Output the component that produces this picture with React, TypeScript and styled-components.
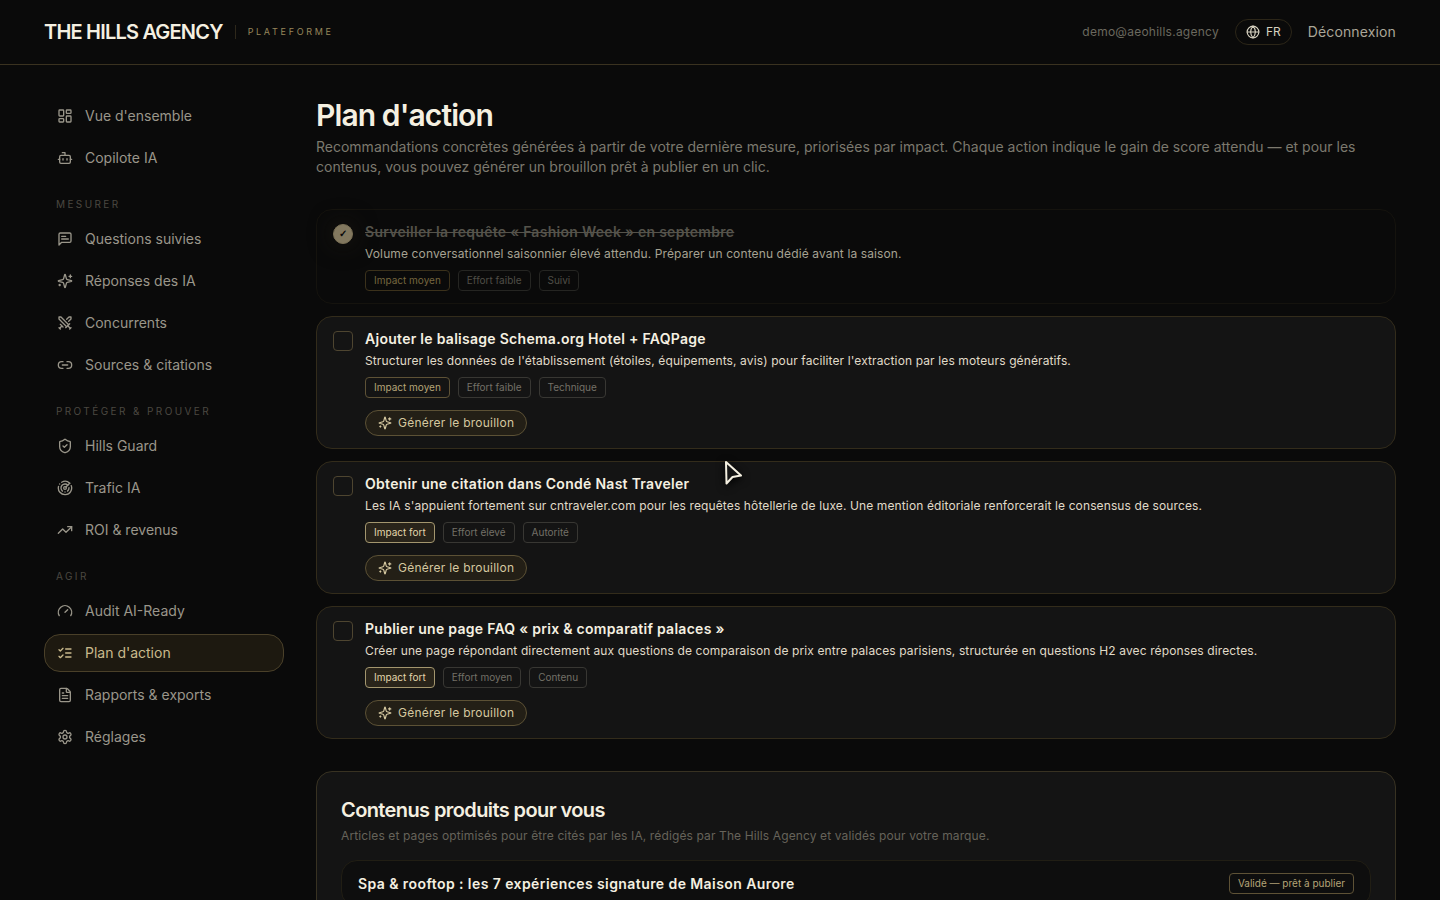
import React from "react";
import styled, { createGlobalStyle, css } from "styled-components";
import {
  LayoutDashboard, Bot, Swords, Link2, ShieldCheck, Radar, TrendingUp, Gauge, FileText, Globe,
} from "lucide-react";

const GlobalStyle = createGlobalStyle`
  * { box-sizing: border-box; }
  body {
    margin: 0;
    background: #0a0a0a;
    color: #f5f0e1;
    font-family: Inter, "Liberation Sans", sans-serif;
    font-size: 14px;
    line-height: 20px;
  }
  h1, h2, h3, p, ul { margin: 0; padding: 0; }
  ul { list-style: none; }
  button { font: inherit; letter-spacing: inherit; cursor: pointer; }
`;

const Shell = styled.div`
  height: 100vh;
  overflow: hidden;
  position: relative;
`;

const Header = styled.header`
  display: flex;
  align-items: center;
  justify-content: space-between;
  height: 65px;
  padding: 0 44px;
  border-bottom: 1px solid #3a3220;
`;

const Brand = styled.div`
  display: flex;
  align-items: center;
  gap: 12px;
`;

const BrandName = styled.a`
  color: #f5f0e1;
  text-decoration: none;
  font-size: 20px;
  line-height: 28px;
  font-weight: 600;
  letter-spacing: -0.04em;
`;

const BrandTag = styled.span`
  padding-left: 12px;
  border-left: 1px solid #2e281b;
  color: #97865a;
  font-size: 9px;
  line-height: 14px;
  letter-spacing: 0.3em;
`;

const Account = styled.div`
  display: flex;
  align-items: center;
  gap: 16px;
`;

const Email = styled.span`
  color: #6b695f;
  font-size: 12px;
  line-height: 16px;
  letter-spacing: 0.02em;
`;

const LangButton = styled.button`
  display: flex;
  align-items: center;
  gap: 6px;
  height: 26px;
  padding: 0 10px;
  border: 1px solid #2c2618;
  border-radius: 13px;
  background: transparent;
  color: #d6d1c0;
  font-size: 12px;
`;

const LogoutButton = styled.button`
  padding: 0;
  border: 0;
  background: transparent;
  color: #aaa698;
  letter-spacing: 0.01em;
`;

const Body = styled.div`
  display: grid;
  grid-template-columns: 240px minmax(0, 1fr);
  gap: 32px;
  padding: 32px 44px;
`;

const Nav = styled.nav`
  display: flex;
  flex-direction: column;
  gap: 4px;
`;

const NavHeading = styled.h2`
  padding: 16px 12px 4px;
  color: #4a4841;
  font-size: 10px;
  line-height: 15px;
  font-weight: 400;
  letter-spacing: 0.24em;
  text-transform: uppercase;
`;

const NavLink = styled.a<{ $active?: boolean }>`
  display: flex;
  align-items: center;
  gap: 12px;
  height: 38px;
  padding: 0 12px;
  border: 1px solid transparent;
  border-radius: 16px;
  color: #9a968a;
  text-decoration: none;
  ${(p) => p.$active && css`
    border-color: #4a4029;
    background: #1d1910;
    color: #c9b98c;
  `}
`;

const Title = styled.h1`
  font-size: 30px;
  line-height: 36px;
  font-weight: 600;
  letter-spacing: -0.03em;
`;

const Lead = styled.p`
  margin-top: 4px;
  color: #7c796e;
`;

const ActionList = styled.ul`
  display: flex;
  flex-direction: column;
  gap: 12px;
  margin-top: 32px;
`;

const ActionCard = styled.li<{ $done?: boolean }>`
  display: flex;
  gap: 12px;
  padding: 12px 16px;
  border: 1px solid #332c1b;
  border-radius: 16px;
  background: #141414;
  ${(p) => p.$done && css`
    border-color: #15130e;
    background: #0a0a0a;
  `}
`;

const Check = styled.input`
  appearance: none;
  flex: none;
  display: grid;
  place-items: center;
  width: 20px;
  height: 20px;
  margin: 2px 0 0;
  border: 1px solid #4e4530;
  border-radius: 4px;
  background: transparent;
  &:checked {
    border-color: #7a7056;
    border-radius: 10px;
    background: #82785f;
    box-shadow: 0 0 24px #1c1810;
  }
  &:checked::after {
    content: "✓";
    color: #0a0a0a;
    font-size: 10px;
    line-height: 18px;
    font-weight: 700;
  }
`;

const ActionBody = styled.div`
  min-width: 0;
`;

const ActionTitle = styled.label<{ $done?: boolean }>`
  display: block;
  font-weight: 600;
  letter-spacing: 0.02em;
  color: ${(p) => (p.$done ? "#55534b" : "#f5f0e1")};
  text-decoration: ${(p) => (p.$done ? "line-through" : "none")};
`;

const ActionText = styled.p<{ $done?: boolean }>`
  margin-top: 2px;
  font-size: 12px;
  letter-spacing: 0.01em;
  color: ${(p) => (p.$done ? "#a6a292" : "#e0dbc9")};
`;

const Tags = styled.div`
  display: flex;
  gap: 8px;
  margin-top: 6px;
`;

type Tone = "strong" | "medium" | "mediumDone" | "plain" | "plainDone";
const tones: Record<Tone, ReturnType<typeof css>> = {
  strong: css`border-color: #a3966e; background: #29241a; color: #e3d6ab;`,
  medium: css`border-color: #5e5236; color: #b5a477;`,
  mediumDone: css`border-color: #3b311b; color: #75663f;`,
  plain: css`border-color: #383733; color: #737067;`,
  plainDone: css`border-color: #252522; color: #504e47;`,
};

const Tag = styled.span<{ $tone: Tone }>`
  height: 21px;
  padding: 0 8px;
  border: 1px solid;
  border-radius: 4px;
  font-size: 10px;
  line-height: 19px;
  white-space: nowrap;
  ${(p) => tones[p.$tone]}
`;

const DraftButton = styled.button`
  display: flex;
  align-items: center;
  gap: 6px;
  height: 26px;
  margin-top: 12px;
  padding: 0 12px;
  border: 1px solid #5c5135;
  border-radius: 13px;
  background: #231f16;
  color: #d5c8a0;
  font-size: 12px;
  letter-spacing: 0.02em;
`;

const Panel = styled.section`
  margin-top: 32px;
  padding: 24px;
  border: 1px solid #383222;
  border-radius: 16px;
  background: #141414;
`;

const PanelTitle = styled.h2`
  font-size: 20px;
  line-height: 28px;
  font-weight: 600;
  letter-spacing: -0.03em;
`;

const PanelText = styled.p`
  margin-top: 4px;
  color: #66635a;
  font-size: 12px;
  line-height: 16px;
  letter-spacing: 0.01em;
`;

const Article = styled.article`
  display: flex;
  align-items: center;
  justify-content: space-between;
  margin-top: 16px;
  padding: 12px 16px;
  border: 1px solid #211e14;
  border-radius: 16px;
  background: #0e0e0e;
`;

const ArticleTitle = styled.h3`
  font-size: 14px;
  line-height: 20px;
  font-weight: 600;
  letter-spacing: 0.03em;
`;

const Cursor = styled.svg`
  position: absolute;
  left: 720px;
  top: 456px;
  filter: drop-shadow(0 2px 4px #000);
`;

type IconProps = { size?: number };

const Stroke = ({ size = 16, children }: IconProps & { children: React.ReactNode }) => (
  <svg
    width={size} height={size} viewBox="0 0 24 24" fill="none" stroke="currentColor" strokeWidth="2"
    strokeLinecap="round" strokeLinejoin="round" aria-hidden="true"
  >
    {children}
  </svg>
);

const SparklesIcon = ({ size }: IconProps) => (
  <Stroke size={size}>
    <path d="M9.937 15.5A2 2 0 0 0 8.5 14.063l-6.135-1.582a.5.5 0 0 1 0-.962L8.5 9.936A2 2 0 0 0 9.937 8.5l1.582-6.135a.5.5 0 0 1 .963 0L14.063 8.5A2 2 0 0 0 15.5 9.937l6.135 1.581a.5.5 0 0 1 0 .964L15.5 14.063a2 2 0 0 0-1.437 1.437l-1.582 6.135a.5.5 0 0 1-.963 0z" />
    <path d="M20 3v4M22 5h-4M4 17v2M5 18H3" />
  </Stroke>
);

const MessageIcon = ({ size }: IconProps) => (
  <Stroke size={size}>
    <path d="M21 15a2 2 0 0 1-2 2H7l-4 4V5a2 2 0 0 1 2-2h14a2 2 0 0 1 2 2z" />
    <path d="M13 8H7M17 12H7" />
  </Stroke>
);

const ChecksIcon = ({ size }: IconProps) => (
  <Stroke size={size}>
    <path d="m3 17 2 2 4-4M3 7l2 2 4-4M13 6h8M13 12h8M13 18h8" />
  </Stroke>
);

const SettingsIcon = ({ size }: IconProps) => (
  <Stroke size={size}>
    <path d="M12.22 2h-.44a2 2 0 0 0-2 2v.18a2 2 0 0 1-1 1.73l-.43.25a2 2 0 0 1-2 0l-.15-.08a2 2 0 0 0-2.73.73l-.22.38a2 2 0 0 0 .73 2.73l.15.1a2 2 0 0 1 1 1.72v.51a2 2 0 0 1-1 1.74l-.15.09a2 2 0 0 0-.73 2.73l.22.38a2 2 0 0 0 2.73.73l.15-.08a2 2 0 0 1 2 0l.43.25a2 2 0 0 1 1 1.73V20a2 2 0 0 0 2 2h.44a2 2 0 0 0 2-2v-.18a2 2 0 0 1 1-1.73l.43-.25a2 2 0 0 1 2 0l.15.08a2 2 0 0 0 2.73-.73l.22-.39a2 2 0 0 0-.73-2.73l-.15-.08a2 2 0 0 1-1-1.74v-.5a2 2 0 0 1 1-1.74l.15-.09a2 2 0 0 0 .73-2.73l-.22-.38a2 2 0 0 0-2.73-.73l-.15.08a2 2 0 0 1-2 0l-.43-.25a2 2 0 0 1-1-1.73V4a2 2 0 0 0-2-2z" />
    <circle cx="12" cy="12" r="3" />
  </Stroke>
);

type Entry = { icon: React.ComponentType<IconProps>; label: string; active?: boolean };
const groups: { heading?: string; items: Entry[] }[] = [
  { items: [{ icon: LayoutDashboard, label: "Vue d'ensemble" }, { icon: Bot, label: "Copilote IA" }] },
  {
    heading: "Mesurer",
    items: [
      { icon: MessageIcon, label: "Questions suivies" },
      { icon: SparklesIcon, label: "Réponses des IA" },
      { icon: Swords, label: "Concurrents" },
      { icon: Link2, label: "Sources & citations" },
    ],
  },
  {
    heading: "Protéger & prouver",
    items: [
      { icon: ShieldCheck, label: "Hills Guard" },
      { icon: Radar, label: "Trafic IA" },
      { icon: TrendingUp, label: "ROI & revenus" },
    ],
  },
  {
    heading: "Agir",
    items: [
      { icon: Gauge, label: "Audit AI-Ready" },
      { icon: ChecksIcon, label: "Plan d'action", active: true },
      { icon: FileText, label: "Rapports & exports" },
      { icon: SettingsIcon, label: "Réglages" },
    ],
  },
];

const actions = [
  {
    title: "Surveiller la requête « Fashion Week » en septembre",
    text: "Volume conversationnel saisonnier élevé attendu. Préparer un contenu dédié avant la saison.",
    impact: "Impact moyen", tags: ["Effort faible", "Suivi"], done: true,
  },
  {
    title: "Ajouter le balisage Schema.org Hotel + FAQPage",
    text: "Structurer les données de l'établissement (étoiles, équipements, avis) pour faciliter l'extraction par les moteurs génératifs.",
    impact: "Impact moyen", tags: ["Effort faible", "Technique"], done: false,
  },
  {
    title: "Obtenir une citation dans Condé Nast Traveler",
    text: "Les IA s'appuient fortement sur cntraveler.com pour les requêtes hôtellerie de luxe. Une mention éditoriale renforcerait le consensus de sources.",
    impact: "Impact fort", tags: ["Effort élevé", "Autorité"], done: false,
  },
  {
    title: "Publier une page FAQ « prix & comparatif palaces »",
    text: "Créer une page répondant directement aux questions de comparaison de prix entre palaces parisiens, structurée en questions H2 avec réponses directes.",
    impact: "Impact fort", tags: ["Effort moyen", "Contenu"], done: false,
  },
];

function impactTone(impact: string, done: boolean): Tone {
  if (impact === "Impact fort") return "strong";
  return done ? "mediumDone" : "medium";
}

export default function App() {
  return (
    <Shell>
      <GlobalStyle />
      <Header>
        <Brand>
          <BrandName href="#">THE HILLS AGENCY</BrandName>
          <BrandTag>PLATEFORME</BrandTag>
        </Brand>
        <Account>
          <Email>demo@aeohills.agency</Email>
          <LangButton type="button"><Globe size={14} strokeWidth={2} />FR</LangButton>
          <LogoutButton type="button">Déconnexion</LogoutButton>
        </Account>
      </Header>
      <Body>
        <Nav>
          {groups.map((g, i) => (
            <React.Fragment key={i}>
              {g.heading && <NavHeading>{g.heading}</NavHeading>}
              {g.items.map(({ icon: Icon, label, active }) => (
                <NavLink key={label} href="#" $active={active}>
                  <Icon size={16} />
                  {label}
                </NavLink>
              ))}
            </React.Fragment>
          ))}
        </Nav>
        <main>
          <Title>Plan d'action</Title>
          <Lead>
            Recommandations concrètes générées à partir de votre dernière mesure, priorisées par impact. Chaque action
            indique le gain de score attendu — et pour les contenus, vous pouvez générer un brouillon prêt à publier en
            un clic.
          </Lead>
          <ActionList>
            {actions.map((a, i) => (
              <ActionCard key={a.title} $done={a.done}>
                <Check type="checkbox" id={`action-${i}`} defaultChecked={a.done} />
                <ActionBody>
                  <ActionTitle htmlFor={`action-${i}`} $done={a.done}>{a.title}</ActionTitle>
                  <ActionText $done={a.done}>{a.text}</ActionText>
                  <Tags>
                    <Tag $tone={impactTone(a.impact, a.done)}>{a.impact}</Tag>
                    {a.tags.map((t) => (
                      <Tag key={t} $tone={a.done ? "plainDone" : "plain"}>{t}</Tag>
                    ))}
                  </Tags>
                  {!a.done && (
                    <DraftButton type="button"><SparklesIcon size={14} />Générer le brouillon</DraftButton>
                  )}
                </ActionBody>
              </ActionCard>
            ))}
          </ActionList>
          <Panel>
            <PanelTitle>Contenus produits pour vous</PanelTitle>
            <PanelText>
              Articles et pages optimisés pour être cités par les IA, rédigés par The Hills Agency et validés pour votre marque.
            </PanelText>
            <Article>
              <ArticleTitle>Spa & rooftop : les 7 expériences signature de Maison Aurore</ArticleTitle>
              <Tag $tone="medium">Validé — prêt à publier</Tag>
            </Article>
          </Panel>
        </main>
      </Body>
      <Cursor width="28" height="34" viewBox="0 0 28 34" fill="#141414" stroke="#f5f0e1" strokeWidth="2" strokeLinejoin="round" aria-hidden="true">
        <path d="M6 6 L21 19.500 L12.500 21 L6.500 27.500 Z" />
      </Cursor>
    </Shell>
  );
}
